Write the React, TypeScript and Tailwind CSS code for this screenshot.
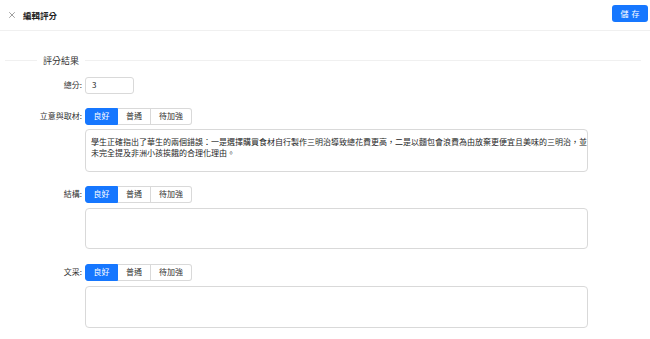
import { X } from 'lucide-react'

const font = { fontFamily: '"Noto Sans CJK TC", "Noto Sans", sans-serif' }

function Segmented() {
  return (
    <div className="flex h-[17px] text-[8px] leading-none">
      <button className="flex w-[33px] items-center justify-center rounded-l-[3px] border border-[#1677ff] bg-[#1677ff] text-white">
        良好
      </button>
      <button className="flex w-[33px] items-center justify-center border-y border-r border-[#d9d9d9] bg-white text-[#333]">
        普通
      </button>
      <button className="flex w-[41px] items-center justify-center rounded-r-[3px] border-y border-r border-[#d9d9d9] bg-white text-[#333]">
        待加強
      </button>
    </div>
  )
}

function Field({ label, lines, h, gap }: { label: string; lines?: string[]; h: string; gap: string }) {
  return (
    <div className="flex flex-col">
      <div className="flex items-center">
        <div className="w-[85px] pr-[3px] text-right text-[8px] text-[#333]">{label}:</div>
        <Segmented />
      </div>
      <div className={`pl-[85px] ${gap}`}>
        <div
          className={`w-[503px] overflow-hidden rounded-[4px] border border-[#d9d9d9] bg-white px-[5px] py-[6px] text-[8px] leading-[11px] text-[#262626] ${h}`}
        >
          {lines?.map((l) => (
            <div key={l} className="whitespace-nowrap">
              {l}
            </div>
          ))}
        </div>
      </div>
    </div>
  )
}

export default function App() {
  return (
    <div className="h-[339px] w-[650px] overflow-hidden bg-white" style={font}>
      <div className="flex h-[31px] items-center justify-between border-b border-[#f0f0f0] pl-[7px] pr-[2px]">
        <div className="flex items-center gap-[6px]">
          <X className="h-[10px] w-[10px] text-[#666]" strokeWidth={1.5} />
          <span className="text-[8.5px] font-bold text-[#222]">編輯評分</span>
        </div>
        <button className="mb-[3px] flex h-[17px] w-[36px] items-center justify-center gap-[3px] rounded-[3px] bg-[#1677ff] text-[8px] text-white">
          <span>儲</span>
          <span>存</span>
        </button>
      </div>

      <div className="pt-[23px]">
        <div className="flex items-center pl-[5px] pr-[9px]">
          <div className="h-px w-[32px] bg-[#f0f0f0]" />
          <span className="px-[6px] text-[9px] text-[#333]">評分結果</span>
          <div className="h-px flex-1 bg-[#f0f0f0]" />
        </div>

        <div className="mt-[9px] flex items-center">
          <div className="w-[85px] pr-[3px] text-right text-[8px] text-[#333]">總分:</div>
          <div className="flex h-[17px] w-[49px] items-center rounded-[3px] border border-[#d9d9d9] px-[6px] text-[8px] text-[#262626]">
            3
          </div>
        </div>

        <div className="mt-[14px] flex flex-col">
          <Field
            label="立意與取材"
            h="h-[43px]"
            gap="mt-[4px]"
            lines={[
              '學生正確指出了華生的兩個錯誤：一是選擇購買食材自行製作三明治導致總花費更高，二是以麵包會浪費為由放棄更便宜且美味的三明治，並',
              '未完全提及非洲小孩挨餓的合理化理由。',
            ]}
          />
          <div className="h-[14px]" />
          <Field label="結構" h="h-[41px]" gap="mt-[5px]" />
          <div className="h-[15px]" />
          <Field label="文采" h="h-[42px]" gap="mt-[5px]" />
        </div>
      </div>
    </div>
  )
}
